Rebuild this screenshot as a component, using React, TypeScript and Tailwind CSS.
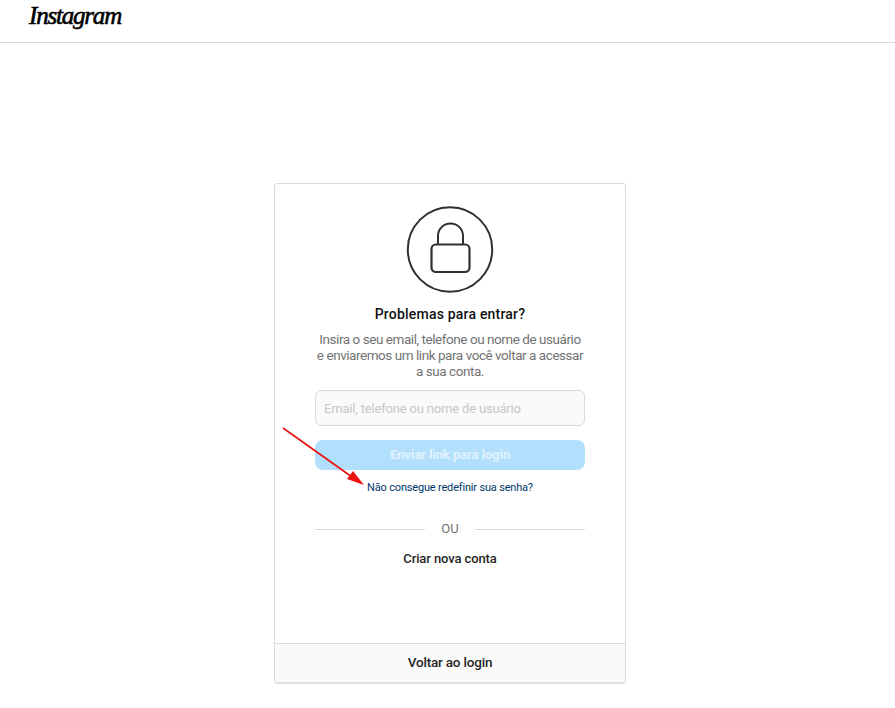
export default function App() {
  return (
    <div className="relative min-h-[708px] bg-white text-[#262626] font-['Roboto',sans-serif]">
      <header className="h-[43px] border-b border-[#dbdbdb] pl-[29px]">
        <span className="block font-['Liberation_Serif',serif] italic text-[25px] leading-[32px] text-black tracking-[-1.2px] [-webkit-text-stroke:0.6px_black]">Instagram</span>
      </header>
      <main className="ml-[274px] mt-[140px] w-[352px] h-[500px] border border-[#dbdbdb] rounded-[3px] flex flex-col items-center shadow-[0_1px_1px_rgba(0,0,0,0.12)]">
        <svg className="mt-[22px] shrink-0" width="88" height="88" viewBox="0 0 88 88" fill="none" stroke="#303030">
          <circle cx="44" cy="43.5" r="42.2" strokeWidth="2" />
          <path d="M32 39 V30 C32 23 37.5 17.5 44.5 17.5 C51.5 17.5 57 23 57 30 V39" strokeWidth="2" />
          <rect x="25.5" y="38.5" width="38" height="27.5" rx="4.5" strokeWidth="2.2" />
        </svg>
        <h1 className="mt-[11px] text-[14px] leading-[18px] font-medium tracking-[0.2px] text-[#111]">Problemas para entrar?</h1>
        <p className="mt-[8px] whitespace-nowrap text-center text-[13.5px] leading-[16px] tracking-[-0.45px] text-[#737373]">
          Insira o seu email, telefone ou nome de usuário<br />e enviaremos um link para você voltar a acessar<br />a sua conta.
        </p>
        <div className="mt-[11px] w-[270px] h-[36px] shrink-0 border border-[#dbdbdb] rounded-[6px] bg-[#fafafa] flex items-center pl-[8px] pt-[1px] text-[13px] tracking-[-0.18px] text-[#c7c7c7]">
          Email, telefone ou nome de usuário
        </div>
        <button className="mt-[14px] w-[270px] h-[30px] shrink-0 rounded-[8px] bg-[#b2dffc] pb-[1px] text-white/60 text-[13.5px] tracking-[-0.3px] font-bold">
          Enviar link para login
        </button>
        <a className="mt-[10px] text-[11px] leading-[16px] tracking-[-0.18px] text-[#00376b]">Não consegue redefinir sua senha?</a>
        <div className="mt-[24px] w-[270px] flex items-center">
          <div className="flex-1 h-px bg-[#dbdbdb]" />
          <span className="w-[50px] text-center text-[13px] leading-[18px] text-[#737373]">OU</span>
          <div className="flex-1 h-px bg-[#dbdbdb]" />
        </div>
        <a className="mt-[12px] text-[13px] leading-[18px] tracking-[-0.1px] font-medium text-[#262626]">Criar nova conta</a>
        <div className="mt-auto w-full h-[39px] bg-[#fafafa] border-t border-[#dbdbdb] flex items-center justify-center pb-[1px] text-[13.5px] tracking-[-0.2px] font-medium rounded-b-[3px]">
          Voltar ao login
        </div>
      </main>
      <svg className="absolute left-[280px] top-[425px]" width="90" height="64" viewBox="0 0 90 64" fill="none">
        <path d="M3 3 L72 52" stroke="#ee0f0f" strokeWidth="1.6" />
        <path d="M84 60 L67 54 L73 46 Z" fill="#ee0f0f" />
      </svg>
    </div>
  );
}
